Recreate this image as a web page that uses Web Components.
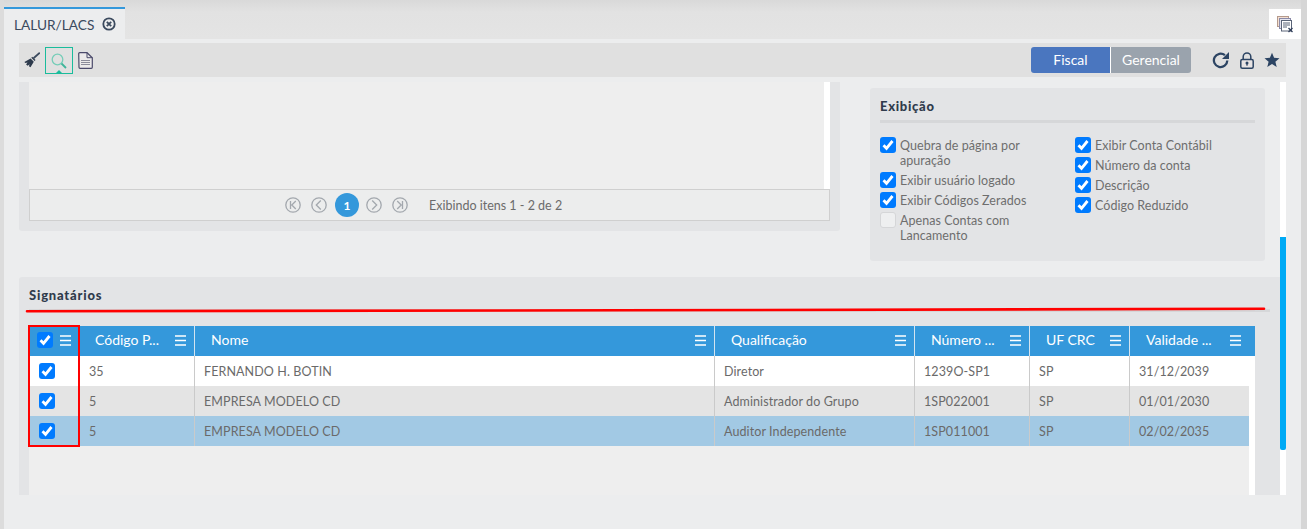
<!DOCTYPE html>
<html lang="pt">
<head>
<meta charset="utf-8">
<title>LALUR/LACS</title>
<style>
  html, body { margin: 0; height: 100%; overflow: hidden; }
  body { font-family: Lato, "Liberation Sans", sans-serif; background: #ecedee; }
</style>
</head>
<body>
<app-shell></app-shell>

<script>
// check box usado no painel e na grade
class CheckMark extends HTMLElement {
  connectedCallback() {
    if (!this.shadowRoot) this.attachShadow({ mode: "open" });
    const on = this.hasAttribute("checked");
    this.shadowRoot.innerHTML = `
      <style>
        :host { display: block; width: 16px; height: 16px; flex: none; }
        .box { width: 16px; height: 16px; border-radius: 3px; box-sizing: border-box; }
        .on { background: #007bff; }
        .off { background: #eeeff0; border: 1px solid #d5d6d8; }
        svg { display: block; }
      </style>
      <div class="box ${on ? "on" : "off"}">
        ${on ? `<svg width="16" height="16" viewBox="0 0 16 16"><path d="M3.5 8.300l3 3L12.500 4" fill="none" stroke="#fff" stroke-width="2.800"/></svg>` : ""}
      </div>`;
  }
}
customElements.define("check-mark", CheckMark);

class TabBar extends HTMLElement {
  constructor() {
    super();
    this.attachShadow({ mode: "open" });
    this.shadowRoot.innerHTML = `
      <style>
        :host { display: flex; height: 39px; box-sizing: border-box; padding-top: 7px; justify-content: space-between;
                background: linear-gradient(#d9d9d9, #e2e2e2 12px, #e4e4e4); }
        .tab { width: 121px; height: 32px; box-sizing: border-box; border-top: 2px solid #3498db; background: #ecedee;
               display: flex; align-items: center; gap: 8px; padding-left: 10px; color: #3b4a5e; font-size: 13.700px; }
        .corner { width: 32px; height: 30px; margin-top: 2px; background: #fff; display: flex; align-items: center; justify-content: center; }
      </style>
      <div class="tab">LALUR/LACS
        <svg width="14" height="14" viewBox="0 0 14 14"><circle cx="7" cy="7" r="5.700" fill="none" stroke="#3b4a5e" stroke-width="1.800"/><path d="M4.800 4.800l4.400 4.400M9.200 4.800l-4.400 4.400" stroke="#3b4a5e" stroke-width="1.800"/></svg>
      </div>
      <div class="corner">
        <svg width="18" height="18" viewBox="0 0 18 18" fill="none">
          <rect x="1.500" y="1.500" width="11" height="10" fill="#f4e0d2" stroke="#b59a8c"/>
          <rect x="3.500" y="3.500" width="11" height="10" fill="#e6e6f0" stroke="#8a8aa8"/>
          <rect x="5.500" y="5.500" width="10" height="10.500" fill="#fff" stroke="#5a6478"/>
          <path d="M7 8h7M7 10h7M7 12h4" stroke="#5a6478"/>
          <path d="M12.500 13l4 4M16.500 13l-4 4" stroke="#33415c" stroke-width="1.300"/>
        </svg>
      </div>`;
  }
}
customElements.define("tab-bar", TabBar);

class ToolBar extends HTMLElement {
  constructor() {
    super();
    this.attachShadow({ mode: "open" });
    this.shadowRoot.innerHTML = `
      <style>
        :host { display: flex; align-items: center; height: 34px; background: #e0e0e0; padding: 0 6px 0 5px; }
        .broom { width: 16px; height: 16px; margin-right: 5px; }
        .active { position: relative; box-sizing: border-box; width: 28px; height: 27px; margin: 1px 5px 0 0; border: 1px solid #1abc9c;
                  display: flex; align-items: center; justify-content: center; }
        .active::after { content: ""; position: absolute; left: 10px; bottom: 0; border: 3px solid transparent; border-bottom-color: #1abc9c; border-top: 0; }
        svg { display: block; flex: none; }
        .seg { margin-left: auto; display: flex; height: 26px; border-radius: 3px; overflow: hidden; color: #fff; font-size: 14px; }
        .seg div { display: flex; align-items: center; justify-content: center; padding-bottom: 2px; }
        .fiscal { width: 79px; background: #4a76bf; border-right: 1px solid #fff; }
        .gerencial { width: 80px; background: #9aa3ad; }
        .right { display: flex; align-items: center; margin-left: 21px; }
      </style>
      <div class="broom">
        <svg width="16" height="16" viewBox="0 0 16 16"><path d="M15.800 .800L9.500 6.200" stroke="#3b4a5e" stroke-width="1.800"/><path d="M8.200 4.800l3.300 3.300-.9 1-3.300-3.300z" fill="#2d3a4c"/><path d="M6.600 6.600l3.200 3.200-3.300 5.500-1.600-1.100.7-1.900-2 1.500-1.500-1.300 1.400-1.900-2.100.5-1-1.200z" fill="#2d3a4c"/></svg>
      </div>
      <div class="active">
        <svg width="16" height="16" viewBox="0 0 16 16" fill="none"><circle cx="6.500" cy="6.500" r="5.300" stroke="#76cdb8" stroke-width="1.300"/><path d="M10.500 10.500l4.500 4.500" stroke="#3fb59a" stroke-width="1.800"/></svg>
      </div>
      <svg width="15" height="17" viewBox="0 0 15 17" fill="none"><path d="M.7 1.700a1 1 0 0 1 1-1h7.300l5.300 5v9.600a1 1 0 0 1-1 1h-11.300a1 1 0 0 1-1-1z" stroke="#4b4a6b" stroke-width="1.200" fill="#eceaea"/><path d="M9 .7v5h5.300" stroke="#4b4a6b"/><path d="M3 8.500h9M3 10.500h9M3 12.500h9" stroke="#8c8c9a"/></svg>
      <div class="seg"><div class="fiscal">Fiscal</div><div class="gerencial">Gerencial</div></div>
      <div class="right">
        <svg width="18" height="18" viewBox="0 0 18 18" fill="none" style="margin-right:10px"><path d="M15.300 9.500a6.700 6.700 0 1 1-2.400-5.300" stroke="#2c4463" stroke-width="2.300"/><path d="M17 1v7h-7z" fill="#2c4463"/></svg>
        <svg width="14" height="17" viewBox="0 0 14 17" fill="none" style="margin-right:10px"><rect x=".8" y="7.500" width="12.400" height="8.700" rx="1.500" stroke="#2c4463" stroke-width="1.500" fill="#e8e4e4"/><path d="M3.200 7.500V4.700a3.800 3.800 0 0 1 7.600 0v2.800" stroke="#2c4463" stroke-width="1.500"/><circle cx="7" cy="11" r="1.500" fill="#2c4463"/><path d="M7 11.500v2.300" stroke="#2c4463" stroke-width="1.200"/></svg>
        <svg width="16" height="16" viewBox="0 0 16 16"><path d="M8 .8l2.100 5 5.400.4-4.100 3.500 1.300 5.300L8 12.100 3.300 15l1.300-5.300L.5 6.200l5.400-.4z" fill="#2c4463"/></svg>
      </div>`;
  }
}
customElements.define("tool-bar", ToolBar);

class PagerBar extends HTMLElement {
  constructor() {
    super();
    this.attachShadow({ mode: "open" });
    const nav = (d, m) => `<svg width="16" height="16" viewBox="0 0 16 16" fill="none" stroke="#a3a8ae" stroke-width="1.300" style="margin-right:${m}px"><circle cx="8" cy="8" r="7.200"/><path d="${d}"/></svg>`;
    this.shadowRoot.innerHTML = `
      <style>
        :host { display: flex; align-items: center; height: 32px; box-sizing: border-box; border: 1px solid #cfcfcf; background: #eceded;
                padding-left: 255px; color: #6b6b6b; font-size: 12.500px; }
        svg { display: block; flex: none; }
        .cur { width: 24px; height: 24px; border-radius: 50%; background: #3498db; color: #fff; font-weight: 700; font-size: 12px;
               display: flex; align-items: center; justify-content: center; margin-right: 7px; }
        .info { margin-left: 21px; }
      </style>
      ${nav("M5.500 4v8M10.800 4l-4 4 4 4", 10)}
      ${nav("M9.800 3.500l-4.500 4.500 4.500 4.500", 8)}
      <div class="cur">1</div>
      ${nav("M6.200 3.500l4.500 4.500-4.500 4.500", 10)}
      ${nav("M10.500 4v8M5.200 4l4 4-4 4", 0)}
      <div class="info">Exibindo itens 1 - 2 de 2</div>`;
  }
}
customElements.define("pager-bar", PagerBar);

class OptionCheck extends HTMLElement {
  constructor() {
    super();
    this.attachShadow({ mode: "open" });
    const on = this.hasAttribute("checked");
    this.shadowRoot.innerHTML = `
      <style>
        :host { display: flex; gap: 4px; color: #6e6e6e; font-size: 12.500px; line-height: 15px; letter-spacing: .05px; padding-bottom: 5px; }
        check-mark { margin: -1px 0; }
      </style>
      <check-mark ${on ? "checked" : ""}></check-mark>
      <div><slot></slot></div>`;
  }
}
customElements.define("option-check", OptionCheck);

class ExibicaoPanel extends HTMLElement {
  constructor() {
    super();
    this.attachShadow({ mode: "open" });
    this.shadowRoot.innerHTML = `
      <style>
        :host { display: block; width: 395px; height: 173px; box-sizing: border-box; margin-top: 6px; padding: 10px 10px 0; background: #e3e4e6; border-radius: 3px; }
        h3 { margin: 0; height: 22px; border-bottom: 3px solid #d6d7d9; font-size: 13px; font-weight: 900; color: #2f3b4c; letter-spacing: .7px; line-height: 17px; }
        .cols { display: grid; grid-template-columns: 195px 1fr; margin-top: 15px; }
        .first { padding-right: 20px; }
      </style>
      <h3>Exibição</h3>
      <div class="cols">
        <div class="first"><slot name="a"></slot></div>
        <div><slot name="b"></slot></div>
      </div>`;
  }
}
customElements.define("exibicao-panel", ExibicaoPanel);

class ListPanel extends HTMLElement {
  constructor() {
    super();
    this.attachShadow({ mode: "open" });
    this.shadowRoot.innerHTML = `
      <style>
        :host { display: block; width: 821px; height: 149px; box-sizing: border-box; background: #e3e4e6; padding: 0 10px; border-radius: 0 0 3px 3px; }
        .blank { height: 107px; background: #eeeeee; display: flex; justify-content: flex-end; }
        .blank div { width: 6px; background: #fff; }
      </style>
      <div class="blank"><div></div></div>
      <pager-bar></pager-bar>`;
  }
}
customElements.define("list-panel", ListPanel);

class GridCell extends HTMLElement {
  constructor() {
    super();
    this.attachShadow({ mode: "open" });
    this.shadowRoot.innerHTML = `
      <style>
        :host { display: flex; align-items: center; box-sizing: border-box; height: 30px; overflow: hidden; white-space: nowrap;
                padding-left: 9px; font-size: 12.500px; color: #6a6a6a; letter-spacing: .1px; border-left: 1px solid #cacaca; }
        :host([plain]) { border-left: 0; }
        :host([first]) { border-left: 0; padding-left: 10px; }
      </style>
      <slot></slot>`;
  }
}
customElements.define("grid-cell", GridCell);

class GridHead extends HTMLElement {
  constructor() {
    super();
    this.attachShadow({ mode: "open" });
    this.shadowRoot.innerHTML = `
      <style>
        :host { display: flex; align-items: center; box-sizing: border-box; height: 30px; background: #3498db; color: #fff; font-size: 14px;
                border-left: 1px solid #d4e4f0; padding: 0 8px 3px 16px; justify-content: space-between; white-space: nowrap; }
        :host([plain]) { border-left: 0; padding-left: 15px; }
        :host([first]) { border-left: 0; padding: 0 9px 3px 8px; }
        :host([last]) { padding-right: 14px; }
        ::slotted(check-mark) { margin-top: 1px; }
        svg { display: block; flex: none; margin-top: 2px; }
      </style>
      <slot></slot>
      <svg width="11" height="11" viewBox="0 0 11 11"><path d="M0 1h11M0 5.500h11M0 10h11" stroke="#fff" stroke-width="1.700"/></svg>`;
  }
}
customElements.define("grid-head", GridHead);

class SignatariosGrid extends HTMLElement {
  constructor() {
    super();
    this.attachShadow({ mode: "open" });
    const heads = ["Código P...", "Nome", "Qualificação", "Número ...", "UF CRC", "Validade ..."];
    const rows = [
      ["35", "FERNANDO H. BOTIN", "Diretor", "1239O-SP1", "SP", "31/12/2039"],
      ["5", "EMPRESA MODELO CD", "Administrador do Grupo", "1SP022001", "SP", "01/01/2030"],
      ["5", "EMPRESA MODELO CD", "Auditor Independente", "1SP011001", "SP", "02/02/2035"],
    ];
    this.shadowRoot.innerHTML = `
      <style>
        :host { display: block; position: relative; width: 1226px; height: 169px; background: linear-gradient(90deg, #eeeeee 1220px, #fff 1220px); }
        .row { display: grid; grid-template-columns: 51px 114px 520px 200px 115px 100px 126px; }
        .white { background: #fff; }
        .alt, .sel { width: 1220px; grid-template-columns: 51px 114px 520px 200px 115px 100px 120px; }
        .alt { background: #e4e4e4; }
        .sel { background: #a2c9e4; }
        .mark { position: absolute; left: -1px; top: -1px; width: 52px; height: 122px; box-sizing: border-box; border: 2px solid #f00; pointer-events: none; }
      </style>
      <div class="row">
        <grid-head first><check-mark checked></check-mark></grid-head>
        ${heads.map((h, i) => `<grid-head ${i === 0 ? "plain" : ""} ${i === 5 ? "last" : ""}>${h}</grid-head>`).join("")}
      </div>
      ${rows.map((r, i) => `
        <div class="row ${["white", "alt", "sel"][i]}">
          <grid-cell first><check-mark checked></check-mark></grid-cell>
          ${r.map((c, j) => `<grid-cell ${j === 0 ? "plain" : ""}>${c}</grid-cell>`).join("")}
        </div>`).join("")}
      <div class="mark"></div>`;
  }
}
customElements.define("signatarios-grid", SignatariosGrid);

class SignatariosPanel extends HTMLElement {
  constructor() {
    super();
    this.attachShadow({ mode: "open" });
    this.shadowRoot.innerHTML = `
      <style>
        :host { display: block; position: relative; height: 218px; box-sizing: border-box; margin: 16px 6px 0 0; background: #e3e4e6; padding: 10px 0 0 10px; border-radius: 3px 0 0 0; }
        h3 { margin: 0 0 14px; width: 1241px; height: 22px; border-bottom: 3px solid #d6d7d9; font-size: 13px; font-weight: 900; color: #2f3b4c; letter-spacing: .8px; line-height: 17px; }
        /* risco vermelho feito a mao por cima do titulo */
        .pen { position: absolute; left: 0; top: 28px; display: block; }
      </style>
      <h3>Signatários</h3>
      <svg class="pen" width="1250" height="10" viewBox="0 0 1250 10"><path d="M8 6.300L600 5.300 1245 3.800" fill="none" stroke="#f00" stroke-width="2.600" stroke-linecap="round"/></svg>
      <signatarios-grid></signatarios-grid>`;
  }
}
customElements.define("signatarios-panel", SignatariosPanel);

class AppShell extends HTMLElement {
  constructor() {
    super();
    this.attachShadow({ mode: "open" });
    this.shadowRoot.innerHTML = `
      <style>
        :host { display: block; height: 529px; box-sizing: border-box; padding: 0 6px 0 4px; background: linear-gradient(90deg, #dcdcdc 4px, #d6d6d6 4px); }
        .main { height: 529px; background: #ecedee; }
        .page { padding: 4px 15px 0; }
        .scroll { position: relative; height: 413px; margin-top: 5px; overflow: hidden; }
        .top { display: flex; justify-content: space-between; padding-right: 21px; }
        .bar { position: absolute; right: 0; top: 0; bottom: 0; width: 6px; background: #fff; }
        .thumb { position: absolute; left: 0; top: 155px; width: 6px; height: 213px; background: #00aaf5; border-radius: 0 0 2px 2px; }
      </style>
      <div class="main">
        <tab-bar></tab-bar>
        <div class="page">
          <tool-bar></tool-bar>
          <div class="scroll">
            <div class="top">
              <list-panel></list-panel>
              <exibicao-panel>
                <option-check slot="a" checked>Quebra de página por apuração</option-check>
                <option-check slot="a" checked>Exibir usuário logado</option-check>
                <option-check slot="a" checked>Exibir Códigos Zerados</option-check>
                <option-check slot="a">Apenas Contas com Lancamento</option-check>
                <option-check slot="b" checked>Exibir Conta Contábil</option-check>
                <option-check slot="b" checked>Número da conta</option-check>
                <option-check slot="b" checked>Descrição</option-check>
                <option-check slot="b" checked>Código Reduzido</option-check>
              </exibicao-panel>
            </div>
            <signatarios-panel></signatarios-panel>
            <div class="bar"><div class="thumb"></div></div>
          </div>
        </div>
      </div>`;
  }
}
customElements.define("app-shell", AppShell);
</script>
</body>
</html>
